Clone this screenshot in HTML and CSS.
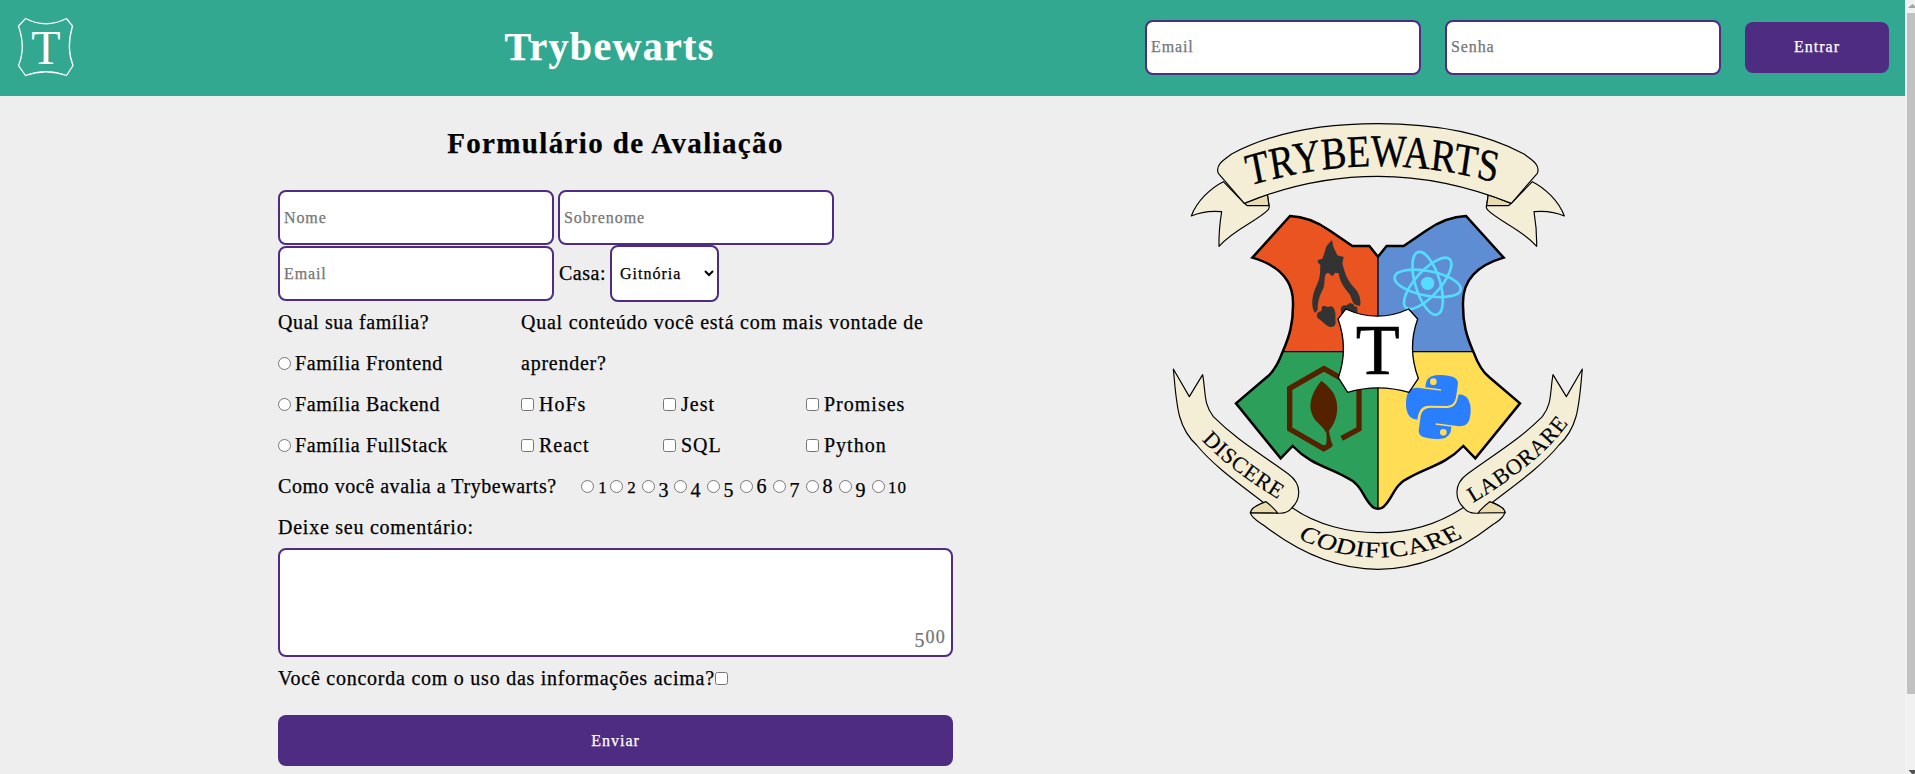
FILE: index.html
```html
<!DOCTYPE html>
<html lang="pt-BR">
<head>
<meta charset="utf-8">
<title>Trybewarts</title>
<link rel="stylesheet" href="styles.css">
</head>
<body>
<div class="page">
  <header class="header">
    <svg class="logo" viewBox="17 17 57 60" width="57" height="60">
      <path d="M25.500 18.500Q46 29 66.500 18.500L72.500 26Q66 48 73 65.500L66.500 75.500Q46 68 25.500 75.500L18.500 65.500Q26 48 18.500 26Z" fill="none" stroke="#fff" stroke-width="1.300"/>
      <text class="logo-letter" x="46" y="64" text-anchor="middle">T</text>
    </svg>
    <h1 class="brand">Trybewarts</h1>
    <form class="login">
      <input class="field" type="text" placeholder="Email">
      <input class="field" type="password" placeholder="Senha">
      <button class="button login-button" type="button">Entrar</button>
    </form>
  </header>
  <main class="main">
    <form class="evaluation">
      <h2 class="form-title">Formulário de Avaliação</h2>
      <div class="row names">
        <input class="field" type="text" placeholder="Nome">
        <input class="field" type="text" placeholder="Sobrenome">
      </div>
      <div class="row">
        <input class="field" type="email" placeholder="Email">
        <label class="house-label" for="house">Casa:</label>
        <select class="house" id="house"><option>Gitnória</option><option>Reactpuff</option><option>Corvinode</option><option>Pytherina</option></select>
      </div>
      <div class="questions">
        <div class="family">
          <p class="line">Qual sua família?</p>
          <label class="line option"><input type="radio" name="family">Família Frontend</label>
          <label class="line option"><input type="radio" name="family">Família Backend</label>
          <label class="line option"><input type="radio" name="family">Família FullStack</label>
        </div>
        <div class="content">
          <p class="line">Qual conteúdo você está com mais vontade de aprender?</p>
          <div class="subjects">
            <label class="line option"><input type="checkbox">HoFs</label>
            <label class="line option"><input type="checkbox">Jest</label>
            <label class="line option"><input type="checkbox">Promises</label>
            <label class="line option"><input type="checkbox">React</label>
            <label class="line option"><input type="checkbox">SQL</label>
            <label class="line option"><input type="checkbox">Python</label>
          </div>
        </div>
      </div>
      <div class="line rating">
        <span class="rating-label">Como você avalia a Trybewarts?</span>
        <label class="rate r1"><input type="radio" name="rate"><span class="num small">1</span></label>
        <label class="rate r2"><input type="radio" name="rate"><span class="num small">2</span></label>
        <label class="rate r3"><input type="radio" name="rate"><span class="num low">3</span></label>
        <label class="rate r4"><input type="radio" name="rate"><span class="num low">4</span></label>
        <label class="rate r5"><input type="radio" name="rate"><span class="num low">5</span></label>
        <label class="rate r6"><input type="radio" name="rate"><span class="num">6</span></label>
        <label class="rate r7"><input type="radio" name="rate"><span class="num low">7</span></label>
        <label class="rate r8"><input type="radio" name="rate"><span class="num">8</span></label>
        <label class="rate r9"><input type="radio" name="rate"><span class="num low">9</span></label>
        <label class="rate r10"><input type="radio" name="rate"><span class="num small">10</span></label>
      </div>
      <label class="line" for="comment">Deixe seu comentário:</label>
      <div class="comment-box">
        <textarea class="comment" id="comment"></textarea>
        <span class="counter"><span class="low">5</span><span class="small">00</span></span>
      </div>
      <label class="line agree">Você concorda com o uso das informações acima?<input type="checkbox"></label>
      <button class="button submit" type="button">Enviar</button>
    </form>
    <svg class="crest" viewBox="0 0 1320 1410" width="440" height="470">
      <defs>
        <clipPath id="shield"><path id="outline" d="M654 440L628 408H577L510 362Q450 320 390 318L277 443C370 470 400 520 399 580C400 640 388 680 368 725Q348 780 320 802L228 880L362 1045L398 1008C450 1062 500 1070 555 1100C610 1125 605 1160 637 1190Q654 1203 671 1190C703 1160 698 1125 753 1100C808 1070 858 1062 910 1008L946 1045L1080 880L988 802Q960 780 940 725C920 680 908 640 909 580C908 520 938 470 1031 443L918 318Q858 320 798 362L731 408H680Z"/></clipPath>
        <g id="ribbon-end">
          <path d="M190 215C150 235 110 275 94 318Q135 300 185 305Q176 360 177 409C225 355 290 335 325 299Q330 290 327 285L322 252L253 280Z" fill="#f4eed7"/>
          <path d="M253 280L322 253L327 287H262Z" fill="#e9ddaf"/>
        </g>
        <g id="lower-ribbon">
          <path d="M40 777L88 860L128 794C138 850 130 880 160 920C230 990 300 1030 385 1092C430 1125 420 1170 395 1194C385 1208 365 1211 350 1209C280 1150 170 1080 110 1005C50 950 50 880 40 777Z" fill="#f4eed7"/>
          <path d="M318 1175C290 1185 272 1195 271 1208L353 1209Q338 1190 318 1175Z" fill="#e9ddaf"/>
        </g>
      </defs>
      <g stroke="#000" stroke-width="3.500" stroke-linejoin="round">
        <use href="#ribbon-end"/>
        <use href="#ribbon-end" transform="matrix(-1 0 0 1 1307 0)"/>
        <path d="M253 280L175 190C165 165 190 150 215 132C340 65 500 41 654 41C808 41 967 65 1092 132C1117 150 1142 165 1132 190L1054 280Q850 199 654 199Q450 199 253 280Z" fill="#f4eed7"/>
      </g>
      <g clip-path="url(#shield)">
        <path d="M200 300H654V725H200Z" fill="#e95420"/>
        <path d="M654 300H1100V725H654Z" fill="#5f8dd3"/>
        <path d="M200 725H654V1210H200Z" fill="#2ca05a"/>
        <path d="M654 725H1100V1210H654Z" fill="#ffdd55"/>
        <path d="M654 420V1210M200 725H1100" stroke="#000" stroke-width="4"/>
      </g>
      <use href="#outline" fill="none" stroke="#000" stroke-width="7.500"/>
      <g fill="#333">
        <path d="M516 390L499 409L492 433L487 446L474 450L473 457L481 465C480 500 480 505 466 535C456 560 452 590 465 609L473 600C473 570 480 555 489 538C497 520 490 500 500 489L507 490L517 499L526 488L536 490C540 520 555 535 565 548C578 563 574 578 588 585L600 588C605 565 595 545 580 530C560 510 552 480 547 460L551 441L532 436L520 410Z"/>
        <path d="M486 590C492 586 496 590 504 591Q514 586 519 592C530 605 525 620 527 638Q525 652 510 651C495 647 488 632 473 625C467 612 475 603 484 604Z"/>
        <path d="M543 605Q540 588 552 586Q562 588 569 579L580 582L582 588L592 592V640H543Z"/>
      </g>
      <g fill="none" stroke="#55ddff" stroke-width="8">
        <ellipse cx="803" cy="520" rx="101" ry="37" transform="rotate(11 803 520)"/>
        <ellipse cx="803" cy="520" rx="98" ry="37" transform="rotate(73 803 520)"/>
        <ellipse cx="803" cy="520" rx="98" ry="37" transform="rotate(-48 803 520)"/>
      </g>
      <circle cx="803" cy="520" r="20" fill="#55ddff"/>
      <path d="M545 985L597 957V835L492 776L389 835V957L491 1016L511 1005" fill="none" stroke="#552200" stroke-width="16"/>
      <path d="M484 812C445 860 440 905 475 940Q492 956 497 966L506 963C540 925 537 870 516 843Q500 822 484 812Z" fill="#552200"/>
      <path d="M495 955H507Q506 975 519 1008L497 1014Q504 980 495 955Z" fill="#552200"/>
      <g fill="#2a7fff">
        <path id="snake" d="M796 832Q796 800 826 796Q850 792 878 800Q894 806 894 820L888 864Q884 886 862 889L808 888C784 890 778 904 776 929Q745 930 739 896Q736 872 742 853Q750 830 778 834L843 842V838L796 832Z"/>
        <use href="#snake" transform="rotate(180 835 891)"/>
      </g>
      <path d="M774 931C777 902 786 890 808 889L862 890Q886 887 890 864L895 852" fill="none" stroke="#ffdd55" stroke-width="4"/>
      <circle cx="820" cy="815" r="10" fill="#ffdd55"/><circle cx="850" cy="967" r="10" fill="#ffdd55"/>
      <path d="M557 597Q653 640 746 597L773 627Q741 715 775 805L747 847Q653 820 563 847L535 803Q566 715 534 627Z" fill="#fff" stroke="#000" stroke-width="4"/>
      <text class="crest-letter" x="653" y="792" text-anchor="middle">T</text>
      <g stroke="#000" stroke-width="3.500" stroke-linejoin="round">
        <path d="M271 1208C275 1225 295 1235 310 1245C420 1330 540 1378 654 1378C768 1378 887 1330 997 1245C1012 1235 1032 1225 1034 1208Q1032 1190 990 1175L908 1194C830 1245 740 1268 654 1268C568 1268 470 1245 398 1194L350 1209Z" fill="#f4eed7"/>
        <use href="#lower-ribbon"/>
        <use href="#lower-ribbon" transform="matrix(-1 0 0 1 1307 0)"/>
      </g>
      <g transform="scale(.84 1)"><path id="top-line" d="M284 237Q760 106 1235 227" fill="none"/><text class="motto top"><textPath href="#top-line" startOffset="50%" text-anchor="middle">TRYBEWARTS</textPath></text></g>
      <path id="left-line" d="M117 982Q200 1075 366 1175" fill="none"/><text class="motto side"><textPath href="#left-line" startOffset="50%" text-anchor="middle">DISCERE</textPath></text>
      <path id="right-line" d="M937 1180Q1140 1060 1227 938" fill="none"/><text class="motto side"><textPath href="#right-line" startOffset="50%" text-anchor="middle">LABORARE</textPath></text>
      <g transform="scale(1.250 1)"><path id="bottom-line" d="M323 1280Q524 1406 736 1277" fill="none"/><text class="motto side"><textPath href="#bottom-line" startOffset="50%" text-anchor="middle">CODIFICARE</textPath></text></g>
    </svg>
  </main>
</div>
<div class="scrollbar">
  <svg class="arrow" viewBox="0 0 10 13" width="10" height="13"><path d="M3 8L7.500 4L12 8Z" fill="#a3a3a3"/></svg>
  <div class="thumb"></div>
  <svg class="arrow" viewBox="0 0 10 5" width="10" height="5"><path d="M3.500 1H13L8 6Z" fill="#505050"/></svg>
</div>
</body>
</html>
```
FILE: styles.css
```css
* { box-sizing: border-box; margin: 0; }
body {
  display: flex;
  width: 1915px;
  height: 774px;
  overflow: hidden;
  background: #eee;
  color: #000;
  font: 20px "Liberation Serif", serif;
  letter-spacing: .75px;
  -webkit-text-stroke: .25px;
}
.page { width: 1905px; }
.header {
  display: flex;
  align-items: center;
  justify-content: space-between;
  height: 96px;
  padding: 0 16px 2px 17px;
  background: #32a891;
}
.logo { margin-top: -1px; }
.logo-letter { font-size: 48px; fill: #fff; letter-spacing: 0; }
.brand { color: #fff; font-size: 40px; line-height: 48px; letter-spacing: 1.300px; }
.login { display: flex; align-items: center; gap: 24px; }
.field {
  width: 276px;
  height: 55px;
  padding: 0 4px;
  border: 2px solid #4e2c82;
  border-radius: 8px;
  background: #fff;
  font: 16px "Liberation Serif", serif;
  letter-spacing: .9px;
}
.field::placeholder { color: #757575; }
.button {
  height: 51px;
  border: 0;
  border-radius: 8px;
  background: #4e2c82;
  color: #fff;
  font: 16px "Liberation Serif", serif;
  letter-spacing: 1px;
}
.login-button { width: 144px; }
.main { display: flex; align-items: flex-start; gap: 207px; padding: 14px 0 0 278px; }
.evaluation { display: flex; flex-direction: column; width: 675px; }
.form-title { height: 80px; padding-top: 16px; font-size: 29px; line-height: 34px; letter-spacing: 1.350px; text-align: center; }
.row { display: flex; align-items: center; height: 57px; }
.names { gap: 4px; align-items: flex-start; height: 55px; }
.house-label { width: 46px; margin: 0 5px; letter-spacing: .5px; }
.house {
  width: 109px;
  height: 57px;
  padding: 0 0 0 4px;
  border: 2px solid #4e2c82;
  border-radius: 8px;
  background: #fff;
  color: #000;
  font: 16px "Liberation Serif", serif;
  letter-spacing: 1px;
}
.questions { display: flex; }
.family { width: 243px; }
.family .line { letter-spacing: .6px; }
.content { width: 432px; }
.line { display: block; line-height: 41px; }
.option { display: flex; align-items: center; gap: 4px; }
input[type="radio"], input[type="checkbox"] { width: 13px; height: 13px; margin: 0; flex: none; }
.subjects { display: grid; grid-template-columns: 142px 143px 1fr; letter-spacing: 1px; }
.subjects .option { gap: 5px; }
.rating { display: flex; height: 41px; }
.rating-label { width: 303px; letter-spacing: .55px; }
.rate { display: flex; align-items: center; gap: 3px; width: 33px; letter-spacing: 0; }
.num { width: 11px; text-align: center; }
.small { font-size: 17px; position: relative; top: 1px; }
.low { position: relative; top: 4px; }
.r1 { width: 29px; }
.r2, .r3 { width: 32px; }
.r10 .num { width: 20px; letter-spacing: 1px; }
.comment-box { position: relative; height: 109px; }
.comment { display: block; width: 675px; height: 109px; border: 2px solid #4e2c82; border-radius: 8px; background: #fff; resize: none; }
.counter { position: absolute; right: 7px; bottom: 9px; color: #757575; letter-spacing: 1.200px; }
.counter .small { font-size: 18px; top: 0; }
.agree { display: flex; align-items: center; height: 41px; margin: 1px 0 16px; }
.crest { flex: none; }
.crest-letter { font-size: 216px; letter-spacing: 0; stroke: #000; stroke-width: 2px; }
.motto { font-family: "Liberation Serif", serif; }
.top { font-size: 136px; letter-spacing: 0; stroke: #000; stroke-width: 1px; }
.side { font-size: 67px; letter-spacing: 2px; stroke: #000; stroke-width: .5px; }
.scrollbar { display: flex; flex-direction: column; width: 10px; height: 774px; background: #f1f1f1; }
.thumb { height: 681px; margin: 0 0 75px 2px; background: #c1c1c1; }
.arrow { flex: none; }
```
